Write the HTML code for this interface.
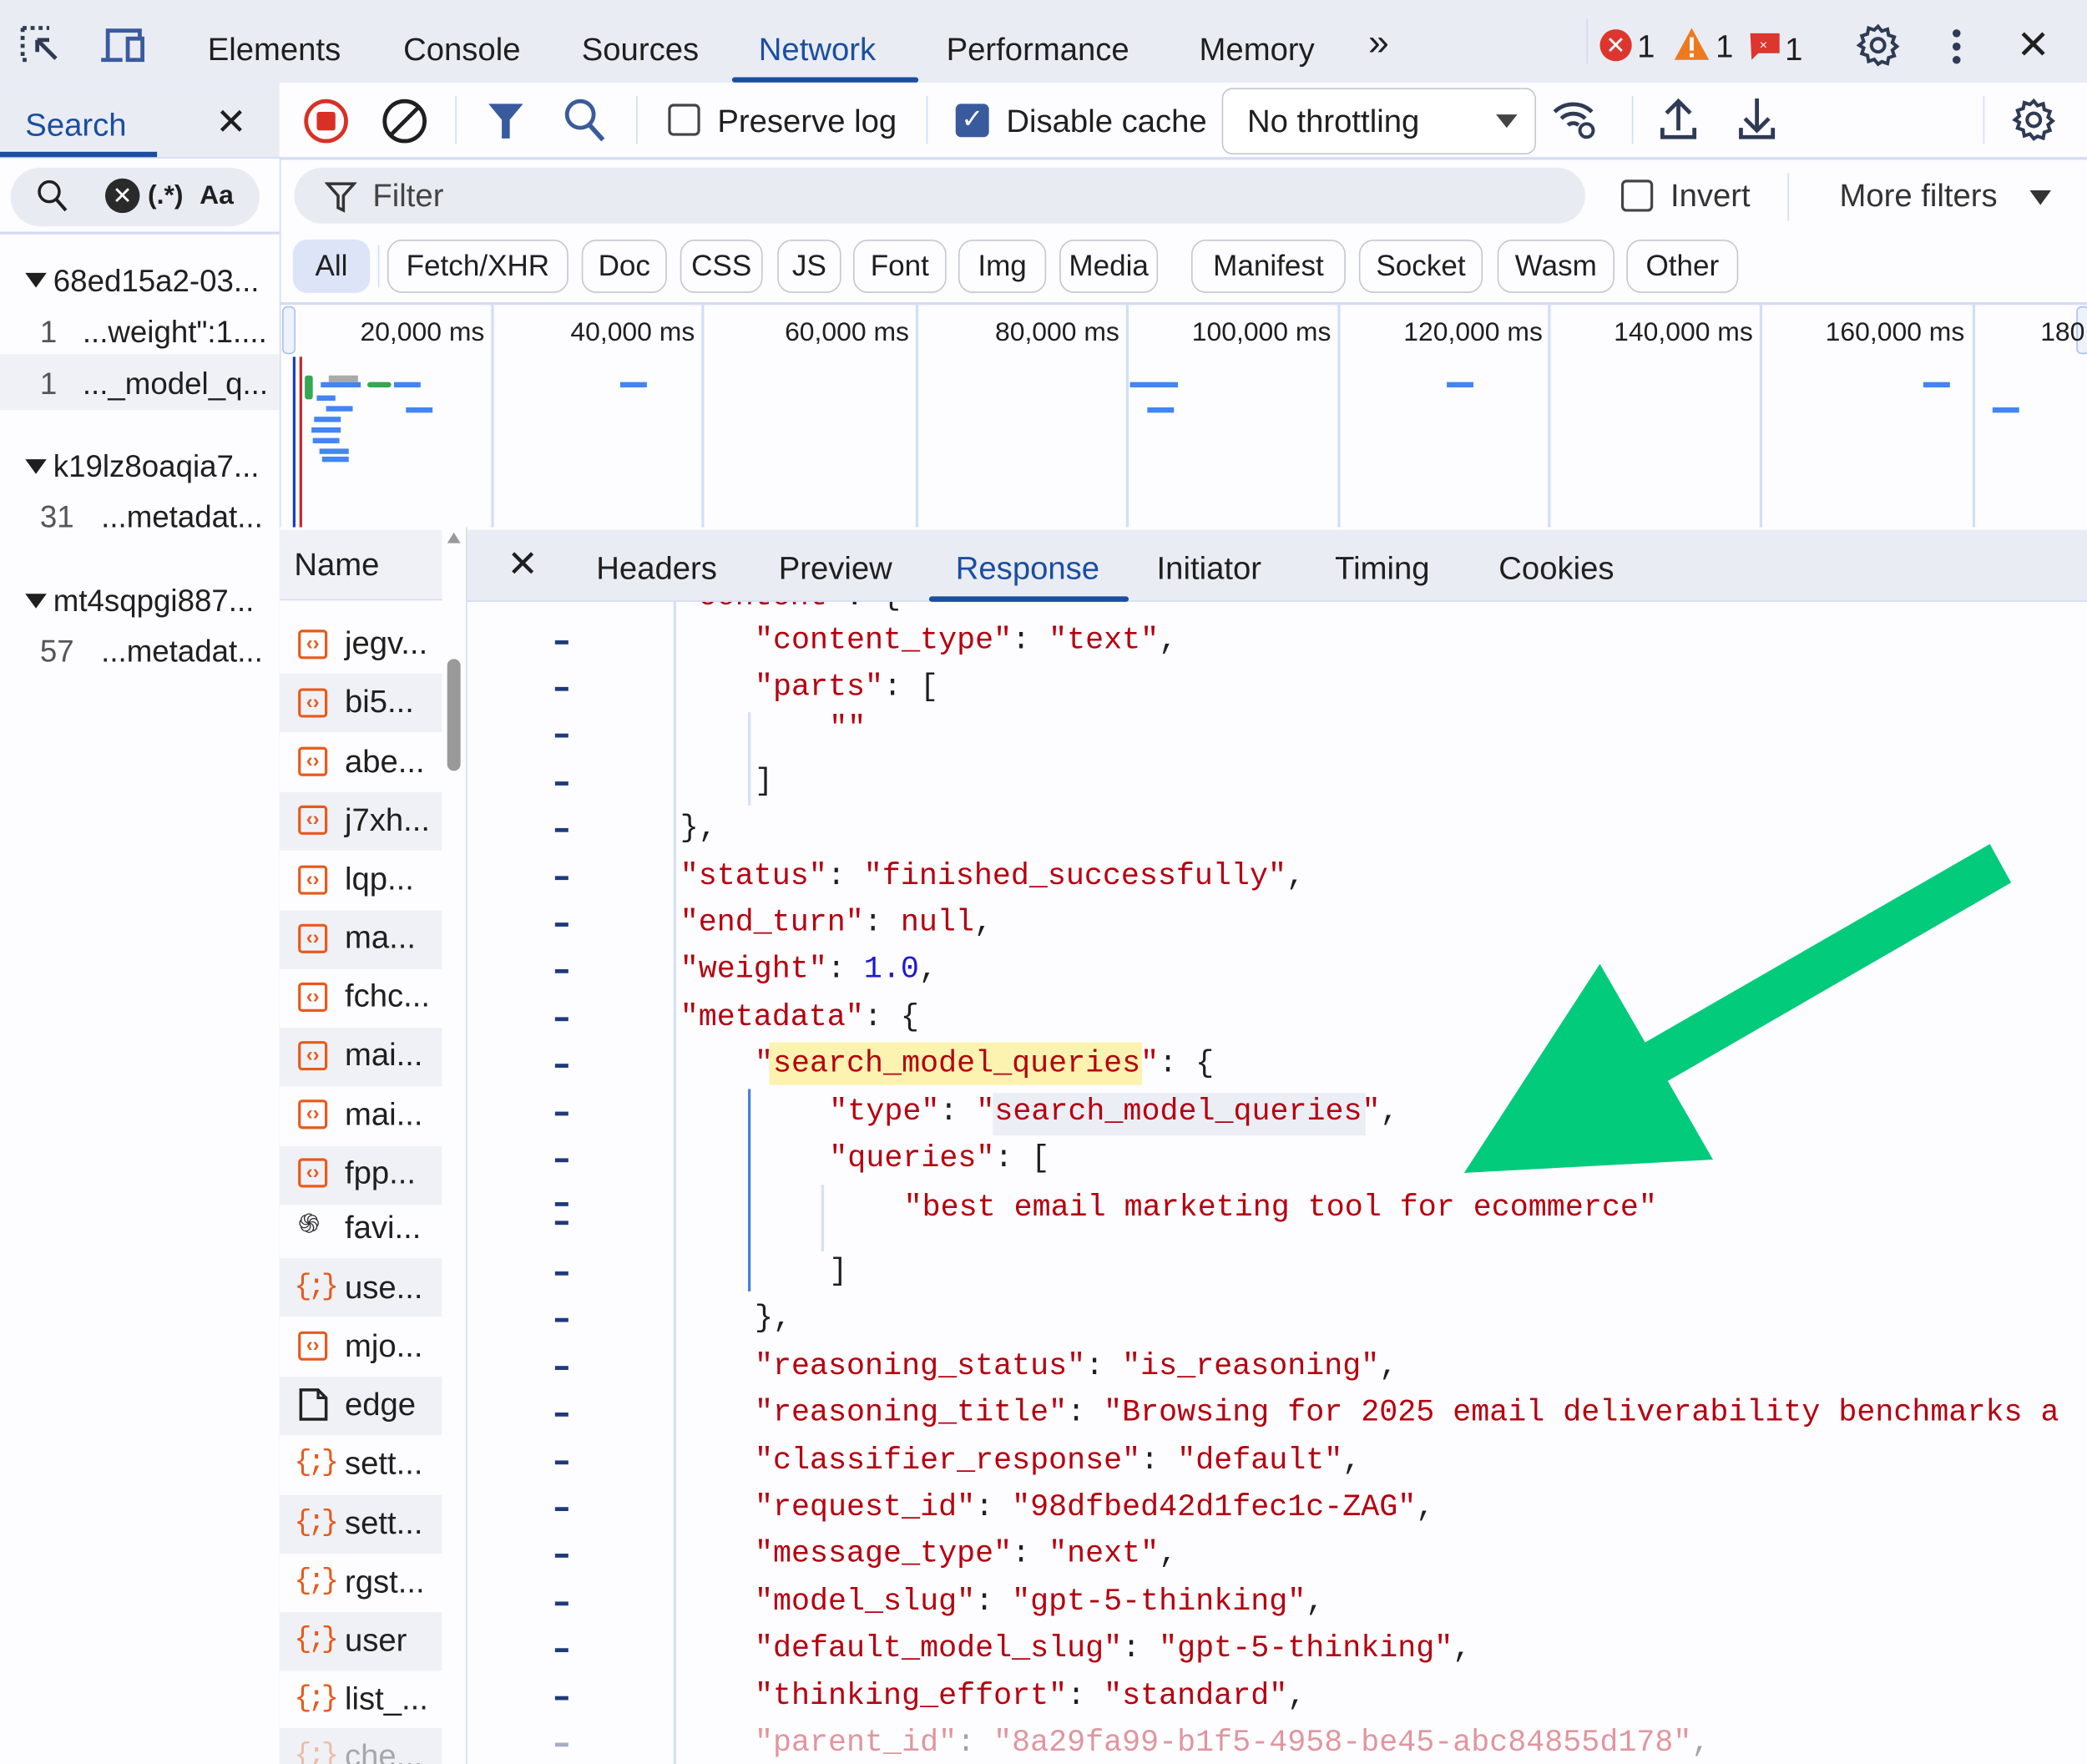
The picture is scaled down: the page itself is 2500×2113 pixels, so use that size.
<!DOCTYPE html>
<html><head><meta charset="utf-8">
<style>
html,body{margin:0;padding:0;width:2500px;height:2113px;overflow:hidden;background:#fdfcff;}
#w{position:absolute;left:0;top:0;width:1568px;height:1325px;transform:scale(1.59439,1.59472);transform-origin:0 0;background:#fdfcff;font-family:"Liberation Sans",sans-serif;color:#1f1f1f;overflow:hidden;}
.a{position:absolute;white-space:nowrap;}
.t{position:absolute;white-space:nowrap;font-size:24px;line-height:24px;}
.chip{position:absolute;top:180px;height:40px;border:1.5px solid #c4c7cf;border-radius:11px;box-sizing:border-box;font-size:22px;line-height:37px;text-align:center;}
.tl{position:absolute;top:240px;font-size:20px;line-height:20px;text-align:right;width:140px;}
.gl{position:absolute;top:228px;width:1.5px;height:168px;background:#d3def7;}
.bar{position:absolute;height:4px;background:#4285f4;}
.row{position:absolute;left:210px;width:122px;height:44.4px;}
.row.s{background:#f0f1f6;}
.nm{position:absolute;left:259px;font-size:24px;line-height:24px;}
.ic{position:absolute;left:224px;width:22px;height:22px;border:2px solid #e8591a;border-radius:3px;box-sizing:border-box;color:#e8591a;font-size:15px;line-height:17px;text-align:center;font-weight:bold;}
.ij{position:absolute;left:221px;color:#e8591a;font-size:22px;line-height:22px;font-family:"Liberation Mono",monospace;letter-spacing:-3px;}
.dash{position:absolute;left:417px;width:10px;height:2.5px;background:#1f3a7a;}
.c{position:absolute;font-family:"Liberation Mono",monospace;font-size:23px;line-height:24px;color:#1f1f1f;white-space:pre;}
.k{color:#b5000f;}
.n{color:#1a1acc;}
.vl{position:absolute;width:1.5px;background:#d6e0f5;}
</style></head><body><div id="w">

<!-- code first (so tabs cover partial line) -->
<div class="c" style="left:511px;top:436px"><span class="k">"content"</span>: {</div>

<!-- top bar -->
<div class="a" style="left:0;top:0;width:1568px;height:62px;background:#eaecf4;border-bottom:1.5px solid #d3dcf3;"></div>
<svg class="a" style="left:14px;top:18px" width="36" height="34" viewBox="0 0 36 34"><path d="M3 3h20M3 3v24M3 27h4" stroke="#2f3b55" stroke-width="3" stroke-dasharray="3 3" fill="none"/><path d="M14 12l14 14M14 12h9M14 12v9" stroke="#2f3b55" stroke-width="3" fill="none"/></svg>
<svg class="a" style="left:74px;top:20px" width="36" height="30" viewBox="0 0 36 30"><path d="M7 24V3h24v5" stroke="#3a5a9e" stroke-width="3" fill="none"/><path d="M2 25h16" stroke="#3a5a9e" stroke-width="3"/><rect x="22" y="9" width="11" height="16" stroke="#3a5a9e" stroke-width="3" fill="none"/></svg>
<div class="t" style="left:156px;top:26px">Elements</div>
<div class="t" style="left:303px;top:26px">Console</div>
<div class="t" style="left:437px;top:26px">Sources</div>
<div class="t" style="left:570px;top:26px;color:#1b4ea0">Network</div>
<div class="a" style="left:550px;top:58px;width:140px;height:4px;background:#1b4ea0;border-radius:2px"></div>
<div class="t" style="left:711px;top:26px">Performance</div>
<div class="t" style="left:901px;top:26px">Memory</div>
<div class="t" style="left:1028px;top:20px;font-size:28px">&#187;</div>
<div class="a" style="left:1202px;top:22px;width:24px;height:24px;border-radius:12px;background:#dc362e;color:#fff;font-size:18px;line-height:24px;text-align:center">✕</div>
<div class="t" style="left:1230px;top:24px">1</div>
<svg class="a" style="left:1257px;top:20px" width="28" height="26"><path d="M14 1L27 25H1Z" fill="#ee7a1f"/><rect x="12.5" y="8" width="3" height="10" fill="#fff"/><rect x="12.5" y="20" width="3" height="3" fill="#fff"/></svg>
<div class="t" style="left:1289px;top:24px">1</div>
<svg class="a" style="left:1314px;top:24px" width="24" height="22"><path d="M1 1h22v15H7l-5 5z" fill="#dc362e"/><text x="8" y="13" font-size="10" fill="#fff" font-family="Liberation Sans">×</text></svg>
<div class="t" style="left:1341px;top:26px">1</div>
<div class="a" style="left:1192px;top:14px;width:1px;height:34px;background:#d3dcf3"></div>
<svg class="a" style="left:1394px;top:17px" width="34" height="34" viewBox="0 0 24 24"><path d="M12 2l2 2.5 3-1 .6 3.1 3 1-1 3 2.4 2-2.4 2 1 3-3 1-.6 3.1-3-1L12 22l-2-2.5-3 1-.6-3.1-3-1 1-3L2 12l2.4-2-1-3 3-1L7 2.9l3 1z" fill="none" stroke="#2f3b55" stroke-width="1.8"/><circle cx="12" cy="12" r="3.5" fill="none" stroke="#2f3b55" stroke-width="1.8"/></svg>
<div class="a" style="left:1467px;top:22px;width:6px;height:6px;border-radius:3px;background:#2f3b55;box-shadow:0 10px 0 #2f3b55,0 20px 0 #2f3b55"></div>
<div class="t" style="left:1515px;top:20px;font-size:30px;line-height:30px">✕</div>

<!-- left panel -->
<div class="a" style="left:0;top:62px;width:210px;height:1263px;background:#fdfcff;border-right:1.5px solid #d3dcf3"></div>
<div class="a" style="left:0;top:62px;width:210px;height:56px;background:#eaecf4;border-bottom:1.5px solid #d3dcf3"></div>
<div class="t" style="left:19px;top:83px;color:#1b4ea0">Search</div>
<div class="a" style="left:0;top:114px;width:118px;height:4px;background:#1b4ea0"></div>
<div class="t" style="left:162px;top:78px;font-size:28px;line-height:28px">✕</div>
<div class="a" style="left:8px;top:126px;width:187px;height:44px;border-radius:22px;background:#e9ebf3"></div>
<svg class="a" style="left:27px;top:134px" width="26" height="28"><circle cx="10" cy="10" r="7.5" stroke="#1f1f1f" stroke-width="2.2" fill="none"/><path d="M15.5 16l7 8" stroke="#1f1f1f" stroke-width="2.5"/></svg>
<div class="a" style="left:79px;top:134px;width:26px;height:26px;border-radius:13px;background:#2a2a2a;color:#fff;font-size:18px;line-height:26px;text-align:center">✕</div>
<div class="a" style="left:111px;top:136px;font-size:20px;font-weight:bold">(.*)</div>
<div class="a" style="left:150px;top:136px;font-size:20px;font-weight:bold">Aa</div>
<div class="a" style="left:0;top:174px;width:210px;height:1.5px;background:#d3dcf3"></div>
<div class="a" style="left:19px;top:205px;width:0;height:0;border-left:8px solid transparent;border-right:8px solid transparent;border-top:11px solid #1f1f1f"></div>
<div class="t" style="left:40px;top:199px;font-size:23px">68ed15a2-03...</div>
<div class="t" style="left:30px;top:237px;font-size:23px;color:#555">1</div>
<div class="t" style="left:62px;top:237px;font-size:23px">...weight":1....</div>
<div class="a" style="left:0;top:266px;width:210px;height:42px;background:#f0f1f6"></div>
<div class="t" style="left:30px;top:276px;font-size:23px;color:#555">1</div>
<div class="t" style="left:62px;top:276px;font-size:23px">..._model_q...</div>
<div class="a" style="left:19px;top:345px;width:0;height:0;border-left:8px solid transparent;border-right:8px solid transparent;border-top:11px solid #1f1f1f"></div>
<div class="t" style="left:40px;top:338px;font-size:23px">k19lz8oaqia7...</div>
<div class="t" style="left:30px;top:376px;font-size:23px;color:#555">31</div>
<div class="t" style="left:76px;top:376px;font-size:23px">...metadat...</div>
<div class="a" style="left:19px;top:446px;width:0;height:0;border-left:8px solid transparent;border-right:8px solid transparent;border-top:11px solid #1f1f1f"></div>
<div class="t" style="left:40px;top:439px;font-size:23px">mt4sqpgi887...</div>
<div class="t" style="left:30px;top:477px;font-size:23px;color:#555">57</div>
<div class="t" style="left:76px;top:477px;font-size:23px">...metadat...</div>

<!-- toolbar -->
<div class="a" style="left:210px;top:62px;width:1358px;height:56px;background:#fdfcff"></div>
<div class="a" style="left:210px;top:118px;width:1358px;height:1.5px;background:#d3dcf3"></div>
<svg class="a" style="left:227px;top:73px" width="36" height="36"><circle cx="18" cy="18" r="15" stroke="#d93025" stroke-width="3" fill="none"/><rect x="11" y="11" width="14" height="14" rx="2" fill="#d93025"/></svg>
<svg class="a" style="left:286px;top:73px" width="36" height="36"><circle cx="18" cy="18" r="15" stroke="#1f1f1f" stroke-width="3" fill="none"/><path d="M8 28L28 8" stroke="#1f1f1f" stroke-width="3"/></svg>
<div class="a" style="left:342px;top:72px;width:1px;height:36px;background:#d3dcf3"></div>
<svg class="a" style="left:366px;top:76px" width="30" height="30"><path d="M1 2h26L17 14v14h-6V14z" fill="#3a5a9e"/></svg>
<svg class="a" style="left:423px;top:73px" width="34" height="34"><circle cx="13" cy="13" r="10" stroke="#3a5a9e" stroke-width="3" fill="none"/><path d="M20 21l10 11" stroke="#3a5a9e" stroke-width="3.5"/></svg>
<div class="a" style="left:478px;top:72px;width:1px;height:36px;background:#d3dcf3"></div>
<div class="a" style="left:502px;top:78px;width:24px;height:24px;border:2px solid #444;border-radius:4px;box-sizing:border-box"></div>
<div class="t" style="left:539px;top:80px">Preserve log</div>
<div class="a" style="left:696px;top:72px;width:1px;height:36px;background:#d3dcf3"></div>
<div class="a" style="left:718px;top:78px;width:25px;height:25px;background:#3a5a9e;border-radius:4px;color:#fff;font-size:20px;line-height:25px;text-align:center">✓</div>
<div class="t" style="left:756px;top:80px">Disable cache</div>
<div class="a" style="left:918px;top:66px;width:236px;height:50px;border:1.5px solid #c4c7cf;border-radius:8px;box-sizing:border-box;background:#fff"></div>
<div class="t" style="left:937px;top:80px">No throttling</div>
<div class="a" style="left:1124px;top:86px;width:0;height:0;border-left:8px solid transparent;border-right:8px solid transparent;border-top:10px solid #444"></div>
<svg class="a" style="left:1166px;top:72px" width="38" height="36"><path d="M2 12a20 20 0 0 1 28 0M7 17a13 13 0 0 1 18 0M12 22a6 6 0 0 1 8 0" stroke="#2f3b55" stroke-width="3" fill="none"/><circle cx="26" cy="26" r="5" stroke="#2f3b55" stroke-width="2.5" fill="none"/></svg>
<div class="a" style="left:1226px;top:72px;width:1px;height:36px;background:#d3dcf3"></div>
<svg class="a" style="left:1246px;top:72px" width="30" height="34"><path d="M15 26V4M6 13l9-9 9 9M3 24v7h24v-7" stroke="#2f3b55" stroke-width="3" fill="none"/></svg>
<svg class="a" style="left:1305px;top:72px" width="30" height="34"><path d="M15 2v24M6 17l9 9 9-9M3 24v7h24v-7" stroke="#2f3b55" stroke-width="3" fill="none"/></svg>
<div class="a" style="left:1490px;top:72px;width:1px;height:36px;background:#d3dcf3"></div>
<svg class="a" style="left:1511px;top:73px" width="34" height="34" viewBox="0 0 24 24"><path d="M12 2l2 2.5 3-1 .6 3.1 3 1-1 3 2.4 2-2.4 2 1 3-3 1-.6 3.1-3-1L12 22l-2-2.5-3 1-.6-3.1-3-1 1-3L2 12l2.4-2-1-3 3-1L7 2.9l3 1z" fill="none" stroke="#2f3b55" stroke-width="1.8"/><circle cx="12" cy="12" r="3.5" fill="none" stroke="#2f3b55" stroke-width="1.8"/></svg>

<!-- filter row -->
<div class="a" style="left:221px;top:126px;width:970px;height:42px;border-radius:21px;background:#e9ebf3"></div>
<svg class="a" style="left:244px;top:136px" width="24" height="24"><path d="M2 2h20l-8 9v11l-4-2v-9z" stroke="#333" stroke-width="2.2" fill="none"/></svg>
<div class="t" style="left:280px;top:136px;color:#444">Filter</div>
<div class="a" style="left:1218px;top:135px;width:24px;height:24px;border:2px solid #444;border-radius:4px;box-sizing:border-box"></div>
<div class="t" style="left:1255px;top:136px;color:#333">Invert</div>
<div class="a" style="left:1343px;top:130px;width:1px;height:36px;background:#d3dcf3"></div>
<div class="t" style="left:1382px;top:136px;color:#333">More filters</div>
<div class="a" style="left:1525px;top:143px;width:0;height:0;border-left:8px solid transparent;border-right:8px solid transparent;border-top:11px solid #333"></div>

<!-- chips -->
<div class="chip" style="left:220px;width:58px;border-color:#dde4f8;background:#dde4f8">All</div>
<div class="a" style="left:284px;top:184px;width:1px;height:32px;background:#d3dcf3"></div>
<div class="chip" style="left:291px;width:136px">Fetch/XHR</div>
<div class="chip" style="left:437px;width:64px">Doc</div>
<div class="chip" style="left:511px;width:62px">CSS</div>
<div class="chip" style="left:584px;width:48px">JS</div>
<div class="chip" style="left:641px;width:70px">Font</div>
<div class="chip" style="left:720px;width:66px">Img</div>
<div class="chip" style="left:796px;width:74px">Media</div>
<div class="chip" style="left:895px;width:116px">Manifest</div>
<div class="chip" style="left:1021px;width:93px">Socket</div>
<div class="chip" style="left:1125px;width:88px">Wasm</div>
<div class="chip" style="left:1222px;width:84px">Other</div>
<div class="a" style="left:210px;top:227px;width:1358px;height:1.5px;background:#d3dcf3"></div>

<!-- timeline -->
<div class="gl" style="left:369px"></div><div class="gl" style="left:527px"></div><div class="gl" style="left:688px"></div><div class="gl" style="left:846px"></div><div class="gl" style="left:1005px"></div><div class="gl" style="left:1163px"></div><div class="gl" style="left:1322px"></div><div class="gl" style="left:1482px"></div>
<div class="a" style="left:212px;top:230px;width:8px;height:34px;border:1.5px solid #aac0ee;border-radius:4px;background:#eef2fb"></div>
<div class="a" style="left:1560px;top:230px;width:8px;height:34px;border:1.5px solid #aac0ee;border-radius:4px;background:#eef2fb"></div>
<div class="tl" style="left:224px">20,000 ms</div>
<div class="tl" style="left:382px">40,000 ms</div>
<div class="tl" style="left:543px">60,000 ms</div>
<div class="tl" style="left:701px">80,000 ms</div>
<div class="tl" style="left:860px">100,000 ms</div>
<div class="tl" style="left:1019px">120,000 ms</div>
<div class="tl" style="left:1336px">160,000 ms</div>
<div class="tl" style="left:1177px">140,000 ms</div>
<div class="a" style="left:1533px;top:240px;font-size:20px;line-height:20px">180</div>
<div class="a" style="left:220px;top:268px;width:2px;height:128px;background:#1a3fb5"></div>
<div class="a" style="left:225px;top:268px;width:2px;height:128px;background:#c62828"></div>
<div class="a" style="left:247px;top:282px;width:22px;height:5px;background:#aaa"></div>
<div class="a" style="left:229px;top:282px;width:6px;height:18px;background:#34a853;border-radius:2px"></div>
<div class="bar" style="left:241px;top:287px;width:30px"></div>
<div class="bar" style="left:276px;top:287px;width:18px;background:#34a853;border-radius:2px"></div>
<div class="bar" style="left:296px;top:287px;width:20px"></div>
<div class="bar" style="left:238px;top:297px;width:14px"></div>
<div class="bar" style="left:245px;top:305px;width:20px"></div>
<div class="bar" style="left:305px;top:306px;width:20px"></div>
<div class="bar" style="left:236px;top:313px;width:20px"></div>
<div class="bar" style="left:234px;top:321px;width:22px"></div>
<div class="bar" style="left:235px;top:329px;width:20px"></div>
<div class="bar" style="left:240px;top:337px;width:22px"></div>
<div class="bar" style="left:242px;top:343px;width:20px"></div>
<div class="bar" style="left:466px;top:287px;width:20px"></div>
<div class="bar" style="left:849px;top:287px;width:36px"></div>
<div class="bar" style="left:862px;top:306px;width:20px"></div>
<div class="bar" style="left:1087px;top:287px;width:20px"></div>
<div class="bar" style="left:1445px;top:287px;width:20px"></div>
<div class="bar" style="left:1497px;top:306px;width:20px"></div>

<!-- name column -->
<div class="a" style="left:210px;top:396px;width:140px;height:929px;background:#fdfcff;border-right:1.5px solid #d3dcf3"></div>
<div class="a" style="left:210px;top:398px;width:122px;height:52px;background:#f0f1f6;border-bottom:1.5px solid #d3dcf3"></div>
<div class="t" style="left:221px;top:413px">Name</div>
<div class="a" style="left:336px;top:400px;width:0;height:0;border-left:5px solid transparent;border-right:5px solid transparent;border-bottom:8px solid #999"></div>
<div class="a" style="left:336px;top:495px;width:10px;height:84px;border-radius:5px;background:#999"></div>
<div class="row" style="top:462px"></div><div class="row s" style="top:506px"></div><div class="row" style="top:551px"></div><div class="row s" style="top:595px"></div><div class="row" style="top:639px"></div><div class="row s" style="top:684px"></div><div class="row" style="top:728px"></div><div class="row s" style="top:772px"></div><div class="row" style="top:817px"></div><div class="row s" style="top:861px"></div><div class="row" style="top:901px"></div><div class="row s" style="top:945px"></div><div class="row" style="top:990px"></div><div class="row s" style="top:1034px"></div><div class="row" style="top:1078px"></div><div class="row s" style="top:1123px"></div><div class="row" style="top:1167px"></div><div class="row s" style="top:1211px"></div><div class="row" style="top:1256px"></div><div class="row s" style="top:1298px"></div>
<div class="ic" style="top:473px">‹›</div><div class="nm" style="top:472px">jegv...</div>
<div class="ic" style="top:517px">‹›</div><div class="nm" style="top:516px">bi5...</div>
<div class="ic" style="top:561px">‹›</div><div class="nm" style="top:561px">abe...</div>
<div class="ic" style="top:605px">‹›</div><div class="nm" style="top:605px">j7xh...</div>
<div class="ic" style="top:650px">‹›</div><div class="nm" style="top:649px">lqp...</div>
<div class="ic" style="top:694px">‹›</div><div class="nm" style="top:693px">ma...</div>
<div class="ic" style="top:738px">‹›</div><div class="nm" style="top:737px">fchc...</div>
<div class="ic" style="top:782px">‹›</div><div class="nm" style="top:781px">mai...</div>
<div class="ic" style="top:826px">‹›</div><div class="nm" style="top:826px">mai...</div>
<div class="ic" style="top:870px">‹›</div><div class="nm" style="top:870px">fpp...</div>
<div class="a" style="left:224px;top:910px;font-size:20px;line-height:20px;color:#333">֍</div><div class="nm" style="top:911px">favi...</div>
<div class="ij" style="top:956px">{;}</div><div class="nm" style="top:956px">use...</div>
<div class="ic" style="top:1000px">‹›</div><div class="nm" style="top:1000px">mjo...</div>
<svg class="a" style="left:224px;top:1042px" width="24" height="26"><path d="M2 2h13l6 6v16H2z" stroke="#222" stroke-width="2.2" fill="none"/><path d="M15 2v6h6" stroke="#222" stroke-width="2" fill="none"/></svg><div class="nm" style="top:1044px">edge</div>
<div class="ij" style="top:1088px">{;}</div><div class="nm" style="top:1088px">sett...</div>
<div class="ij" style="top:1133px">{;}</div><div class="nm" style="top:1133px">sett...</div>
<div class="ij" style="top:1177px">{;}</div><div class="nm" style="top:1177px">rgst...</div>
<div class="ij" style="top:1221px">{;}</div><div class="nm" style="top:1221px">user</div>
<div class="ij" style="top:1265px">{;}</div><div class="nm" style="top:1265px">list_...</div>
<div class="ij" style="top:1308px;opacity:.35">{;}</div><div class="nm" style="top:1308px;opacity:.35">che...</div>

<!-- details tabs -->
<div class="a" style="left:351px;top:398px;width:1217px;height:53px;background:#eaecf4;border-bottom:1.5px solid #d3dcf3"></div>
<div class="t" style="left:381px;top:410px;font-size:28px;line-height:28px">✕</div>
<div class="t" style="left:448px;top:416px">Headers</div>
<div class="t" style="left:585px;top:416px">Preview</div>
<div class="t" style="left:718px;top:416px;color:#1b4ea0">Response</div>
<div class="a" style="left:698px;top:448px;width:150px;height:4px;background:#1b4ea0;border-radius:2px"></div>
<div class="t" style="left:869px;top:416px">Initiator</div>
<div class="t" style="left:1003px;top:416px">Timing</div>
<div class="t" style="left:1126px;top:416px">Cookies</div>

<!-- code -->
<div class="vl" style="left:506px;top:452px;height:873px"></div>
<div class="vl" style="left:562px;top:535px;height:70px"></div>
<div class="vl" style="left:562px;top:818px;height:152px;background:#4a7fd8"></div>
<div class="vl" style="left:617px;top:890px;height:50px"></div>
<div class="dash" style="top:481px"></div><div class="dash" style="top:516px"></div><div class="dash" style="top:551px"></div><div class="dash" style="top:587px"></div><div class="dash" style="top:622px"></div><div class="dash" style="top:658px"></div><div class="dash" style="top:693px"></div><div class="dash" style="top:728px"></div><div class="dash" style="top:764px"></div><div class="dash" style="top:799px"></div><div class="dash" style="top:835px"></div><div class="dash" style="top:870px"></div><div class="dash" style="top:903px"></div><div class="dash" style="top:917px"></div><div class="dash" style="top:955px"></div><div class="dash" style="top:990px"></div><div class="dash" style="top:1026px"></div><div class="dash" style="top:1061px"></div><div class="dash" style="top:1097px"></div><div class="dash" style="top:1132px"></div><div class="dash" style="top:1167px"></div><div class="dash" style="top:1203px"></div><div class="dash" style="top:1238px"></div><div class="dash" style="top:1274px"></div><div class="dash" style="top:1309px;opacity:.4"></div>

<div class="c" style="left:567px;top:469px"><span class="k">"content_type"</span>: <span class="k">"text"</span>,</div>
<div class="c" style="left:567px;top:504px"><span class="k">"parts"</span>: [</div>
<div class="c" style="left:623px;top:535px"><span class="k">""</span></div>
<div class="c" style="left:567px;top:575px">]</div>
<div class="c" style="left:511px;top:610px">},</div>
<div class="c" style="left:511px;top:646px"><span class="k">"status"</span>: <span class="k">"finished_successfully"</span>,</div>
<div class="c" style="left:511px;top:681px"><span class="k">"end_turn"</span>: <span class="k">null</span>,</div>
<div class="c" style="left:511px;top:716px"><span class="k">"weight"</span>: <span class="n">1.0</span>,</div>
<div class="c" style="left:511px;top:752px"><span class="k">"metadata"</span>: {</div>
<div class="a" style="left:578px;top:783px;width:280px;height:32px;background:#fcf3b0"></div>
<div class="c" style="left:567px;top:787px"><span class="k">"search_model_queries"</span>: {</div>
<div class="a" style="left:746px;top:821px;width:280px;height:32px;background:#eceef6"></div>
<div class="c" style="left:623px;top:823px"><span class="k">"type"</span>: <span class="k">"search_model_queries"</span>,</div>
<div class="c" style="left:623px;top:858px"><span class="k">"queries"</span>: [</div>
<div class="c" style="left:679px;top:895px"><span class="k">"best email marketing tool for ecommerce"</span></div>
<div class="c" style="left:623px;top:943px">]</div>
<div class="c" style="left:567px;top:978px">},</div>
<div class="c" style="left:567px;top:1014px"><span class="k">"reasoning_status"</span>: <span class="k">"is_reasoning"</span>,</div>
<div class="c" style="left:567px;top:1049px"><span class="k">"reasoning_title"</span>: <span class="k">"Browsing for 2025 email deliverability benchmarks a</span></div>
<div class="c" style="left:567px;top:1085px"><span class="k">"classifier_response"</span>: <span class="k">"default"</span>,</div>
<div class="c" style="left:567px;top:1120px"><span class="k">"request_id"</span>: <span class="k">"98dfbed42d1fec1c-ZAG"</span>,</div>
<div class="c" style="left:567px;top:1155px"><span class="k">"message_type"</span>: <span class="k">"next"</span>,</div>
<div class="c" style="left:567px;top:1191px"><span class="k">"model_slug"</span>: <span class="k">"gpt-5-thinking"</span>,</div>
<div class="c" style="left:567px;top:1226px"><span class="k">"default_model_slug"</span>: <span class="k">"gpt-5-thinking"</span>,</div>
<div class="c" style="left:567px;top:1262px"><span class="k">"thinking_effort"</span>: <span class="k">"standard"</span>,</div>
<div class="c" style="left:567px;top:1297px;opacity:.4"><span class="k">"parent_id"</span>: <span class="k">"8a29fa99-b1f5-4958-be45-abc84855d178"</span>,</div>

<!-- green arrow -->
<svg class="a" style="left:0;top:0" width="1568" height="1325"><polygon points="1495,634 1511,663 1253,812 1287,871 1100,881 1202,724 1236,783" fill="#02cb7b"/></svg>

</div></body></html>
